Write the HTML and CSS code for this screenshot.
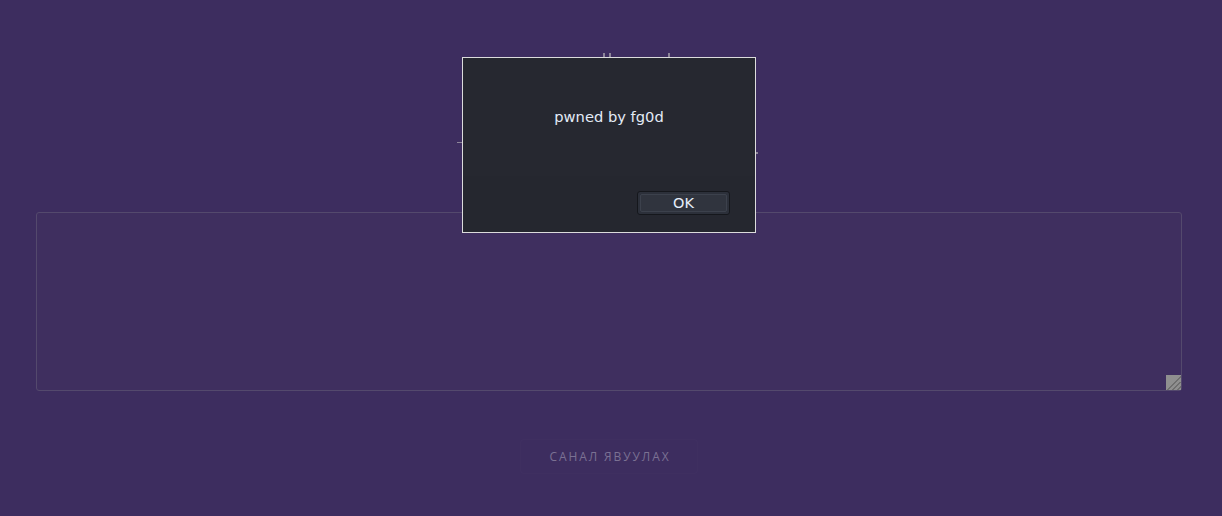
FILE: index.html
```html
<!DOCTYPE html>
<html lang="mn">
<head>
<meta charset="utf-8">
<title>Санал</title>
<link rel="stylesheet" href="styles.css">
</head>
<body>
<div class="page">
  <header class="head">
    <div class="title">
      <span class="mark m1"></span>
      <span class="mark m2"></span>
      <span class="mark m3"></span>
      <span class="mark m4"></span>
      <span class="mark m5"></span>
    </div>
  </header>
  <div class="field">
    <div class="area">
      <span class="grip"></span>
    </div>
  </div>
  <div class="actions">
    <button class="send">САНАЛ ЯВУУЛАХ</button>
  </div>
</div>
<div class="dialog">
  <div class="msg">pwned by fg0d</div>
  <div class="foot">
    <button class="ok"><span>OK</span></button>
  </div>
</div>
</body>
</html>
```
FILE: styles.css
```css
html, body {
  margin: 0;
  padding: 0;
  background: #3d2d5f;
  height: 100%;
  overflow: hidden;
}
.page {
  padding: 0 40px 0 36px;
}
.head {
  height: 212px;
  display: flex;
  justify-content: center;
}
.title {
  position: relative;
  width: 302px;
  margin-left: -12px;
  height: 212px;
}
.mark {
  position: absolute;
  background: #8d8599;
}
.m1 { left: 151px; top: 53px; width: 2px; height: 5px; }
.m2 { left: 157px; top: 53px; width: 2px; height: 5px; }
.m3 { left: 216px; top: 53px; width: 2px; height: 5px; }
.m4 { left: 5px; top: 142px; width: 5px; height: 1px; }
.m5 { left: 304px; top: 152px; width: 2px; height: 2px; }
.field {
  display: flex;
}
.area {
  position: relative;
  flex: 1;
  height: 177px;
  border: 1px solid #54496d;
  border-radius: 3px;
  background: #3f2f5f;
}
.grip {
  position: absolute;
  right: 0;
  bottom: 0;
  width: 15px;
  height: 15px;
  background:
    linear-gradient(135deg, transparent 0 52%, #6f6f6f 52% 58%, transparent 58% 70%, #6f6f6f 70% 76%, transparent 76% 86%, #6f6f6f 86% 92%, transparent 92%),
    #8f8f8f;
}
.actions {
  display: flex;
  justify-content: center;
  padding-top: 48px;
}
.send {
  width: 178px;
  height: 35px;
  background: transparent;
  border: 1px solid rgba(255, 255, 255, 0.01);
  border-radius: 4px;
  color: #7b7193;
  font-family: "Open Sans", "DejaVu Sans", sans-serif;
  font-size: 12px;
  letter-spacing: 1.9px;
  padding: 0 0 0 2px;
}
.dialog {
  position: absolute;
  left: 462px;
  top: 57px;
  width: 292px;
  height: 174px;
  border: 1px solid #dcdcdc;
  background: #262830;
  display: flex;
  flex-direction: column;
  font-family: "DejaVu Sans", sans-serif;
}
.msg {
  height: 118px;
  padding-top: 50px;
  box-sizing: border-box;
  text-align: center;
  font-size: 14.7px;
  color: #e3ebf7;
}
.foot {
  flex: 1;
  background: #25272f;
  display: flex;
  justify-content: flex-end;
  padding: 15px 25px 0 0;
  box-sizing: border-box;
}
.ok {
  width: 93px;
  height: 24px;
  padding: 2px;
  border: 1px solid #15171c;
  border-radius: 3px;
  background: #2c303a;
  display: flex;
}
.ok span {
  flex: 1;
  border: 1px solid #3c414c;
  border-radius: 2px;
  background: #30343e;
  color: #e6eefa;
  font-family: "DejaVu Sans", sans-serif;
  font-size: 14.5px;
  line-height: 16px;
}
```
